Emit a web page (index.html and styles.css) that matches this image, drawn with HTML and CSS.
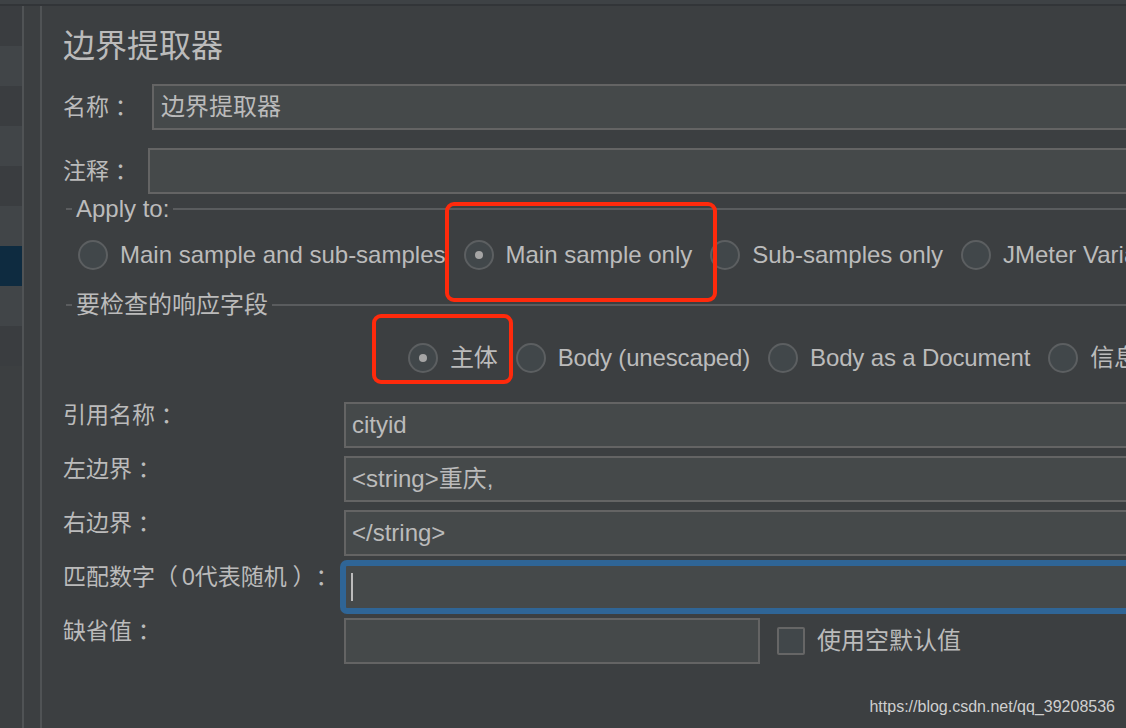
FILE: index.html
```html
<!DOCTYPE html>
<html lang="zh-CN">
<head>
<meta charset="utf-8">
<title>边界提取器</title>
<link rel="stylesheet" href="styles.css">
</head>
<body>
<div class="app">
  <div class="topbar"></div>
  <div class="workspace">
    <div class="tree">
      <div class="tree-row"></div>
      <div class="tree-row alt"></div>
      <div class="tree-row"></div>
      <div class="tree-row alt"></div>
      <div class="tree-row"></div>
      <div class="tree-row alt"></div>
      <div class="tree-row sel"></div>
      <div class="tree-row alt"></div>
      <div class="tree-row"></div>
    </div>
    <div class="vline"></div>
    <div class="gutter"></div>
    <div class="vline"></div>
    <main class="panel">
      <h1 class="title">边界提取器</h1>

      <div class="row row-name">
        <div class="label label-name">名称<span class="punct">：</span></div>
        <div class="input input-name">边界提取器</div>
      </div>
      <div class="row row-comment">
        <div class="label label-comment">注释<span class="punct">：</span></div>
        <div class="input"></div>
      </div>

      <div class="group-head head-apply">
        <span class="group-tick"></span>
        <span class="group-title">Apply to:</span>
        <span class="group-line"></span>
      </div>
      <div class="radios radios-apply">
        <div class="radio"><span class="radio-dot"></span><span>Main sample and sub-samples</span></div>
        <div class="radio"><span class="radio-dot on"></span><span>Main sample only</span></div>
        <div class="radio"><span class="radio-dot"></span><span>Sub-samples only</span></div>
        <div class="radio"><span class="radio-dot"></span><span>JMeter Variable Name to use</span></div>
      </div>

      <div class="group-head head-field">
        <span class="group-tick"></span>
        <span class="group-title">要检查的响应字段</span>
        <span class="group-line"></span>
      </div>
      <div class="radios radios-field">
        <div class="radio"><span class="radio-dot on"></span><span>主体</span></div>
        <div class="radio"><span class="radio-dot"></span><span>Body (unescaped)</span></div>
        <div class="radio"><span class="radio-dot"></span><span>Body as a Document</span></div>
        <div class="radio"><span class="radio-dot"></span><span>信息头</span></div>
        <div class="radio"><span class="radio-dot"></span><span>Request Headers</span></div>
      </div>

      <div class="fields">
        <div class="field">
          <div class="label label-field">引用名称<span class="punct">：</span></div>
          <div class="input input-field">cityid</div>
        </div>
        <div class="field">
          <div class="label label-field">左边界<span class="punct">：</span></div>
          <div class="input input-field">&lt;string&gt;重庆,</div>
        </div>
        <div class="field">
          <div class="label label-field">右边界<span class="punct">：</span></div>
          <div class="input input-field">&lt;/string&gt;</div>
        </div>
        <div class="field">
          <div class="label label-field">匹配数字<span class="paren-open">（</span>0代表随机<span class="punct">）</span><span class="punct">：</span></div>
          <div class="input input-field focus"><span class="caret"></span></div>
        </div>
        <div class="field">
          <div class="label label-field">缺省值<span class="punct">：</span></div>
          <div class="input input-field short"></div>
          <span class="check"></span>
          <span class="check-label">使用空默认值</span>
        </div>
      </div>
    </main>
  </div>

  <div class="mark mark-apply"></div>
  <div class="mark mark-field"></div>
  <div class="watermark">https://blog.csdn.net/qq_39208536</div>
</div>
</body>
</html>
```

FILE: styles.css
```css
* { box-sizing: border-box; }

html, body {
  margin: 0;
  padding: 0;
}

body {
  width: 1126px;
  height: 728px;
  overflow: hidden;
  background: #3c3f41;
  color: #bbbbbb;
  font-family: "Liberation Sans", "Noto Sans CJK SC", sans-serif;
  text-spacing-trim: space-all;
}

.app {
  position: relative;
  width: 1126px;
  height: 728px;
  display: flex;
  flex-direction: column;
}

.topbar {
  flex: none;
  height: 6px;
  background: #3e4245;
  border-bottom: 2px solid #323538;
}

.workspace {
  flex: 1;
  min-height: 0;
  display: flex;
}

.tree {
  flex: none;
  width: 22px;
  display: flex;
  flex-direction: column;
  background: #3c3f41;
}

.tree-row {
  flex: none;
  height: 40px;
  background: #3a3d40;
}

.tree-row.alt { background: #414548; }
.tree-row.sel { background: #0e2b40; }

.vline {
  flex: none;
  width: 2px;
  background: #505355;
}

.gutter {
  flex: none;
  width: 16px;
}

.panel {
  flex: 1;
  min-width: 0;
  overflow: hidden;
  display: flex;
  flex-direction: column;
  padding: 20px 0 0 21px;
}

.title {
  margin: 0;
  font-size: 32px;
  line-height: 40px;
  font-weight: normal;
}

.row {
  display: flex;
  align-items: center;
  height: 46px;
  flex: none;
}

.row-name { margin-top: 18px; }
.row-comment { margin-top: 18px; }

.label {
  flex: none;
  font-size: 23px;
  line-height: 26px;
  white-space: nowrap;
}

.punct {
  display: inline-block;
  width: 1em;
  text-align: center;
  font-feature-settings: "halt" 1;
}

.paren-open {
  display: inline-block;
  width: 27px;
}

.label-name { width: 89px; }
.label-comment { width: 85px; }
.label-field { width: 281px; }

.input {
  flex: 1;
  height: 46px;
  margin-right: -12px;
  padding-left: 7px;
  background: #45494a;
  border: 2px solid #646464;
  font-size: 24px;
  line-height: 42px;
  white-space: nowrap;
  overflow: hidden;
}

.group-head {
  flex: none;
  display: flex;
  align-items: center;
  height: 24px;
  margin-left: 3px;
}

.head-apply { margin-top: 3px; }
.head-field { margin-top: 23px; }

.group-tick {
  flex: none;
  width: 6px;
  height: 2px;
  background: #5a5c5e;
}

.group-title {
  flex: none;
  padding: 0 4px;
  font-size: 24px;
  line-height: 24px;
  white-space: nowrap;
}

.group-line {
  flex: 1;
  height: 2px;
  background: #5a5c5e;
}

.radios {
  flex: none;
  display: flex;
  align-items: center;
  gap: 18px;
  height: 30px;
  white-space: nowrap;
}

.radios-apply { margin: 19px 0 0 15px; }
.radios-field { margin: 26px 0 0 345px; }

.radio {
  flex: none;
  display: flex;
  align-items: center;
  gap: 12px;
  font-size: 24px;
  line-height: 30px;
}

.radios-field .radio { letter-spacing: -0.15px; }

.radio-dot {
  flex: none;
  width: 30px;
  height: 30px;
  border-radius: 50%;
  border: 2px solid #5c5f61;
  background: #41474a;
  display: flex;
  align-items: center;
  justify-content: center;
}

.radio-dot.on::after {
  content: "";
  width: 8px;
  height: 8px;
  border-radius: 50%;
  background: #a5a5a5;
}

.fields {
  flex: none;
  display: flex;
  flex-direction: column;
  gap: 8px;
  margin-top: 29px;
}

.field {
  display: flex;
  align-items: flex-start;
  height: 46px;
}

.input-field { padding-left: 6px; }

.input.focus {
  border-color: #2f6596;
  border-radius: 3px;
  box-shadow: 0 0 0 4px #2f6596;
  padding-left: 5px;
  display: flex;
  align-items: center;
}

.caret {
  display: block;
  width: 2px;
  height: 28px;
  background: #bbbbbb;
}

.input.short {
  flex: none;
  width: 416px;
  margin-right: 0;
}

.check {
  flex: none;
  align-self: center;
  width: 28px;
  height: 28px;
  margin-left: 17px;
  border: 2px solid #666666;
  border-radius: 2px;
  background: #41474a;
}

.check-label {
  flex: none;
  align-self: center;
  margin-left: 12px;
  font-size: 24px;
  line-height: 30px;
  white-space: nowrap;
}

.mark {
  position: absolute;
  border: 4px solid #ff2a0c;
  border-radius: 9px;
}

.mark-apply {
  left: 445px;
  top: 202px;
  width: 272px;
  height: 100px;
}

.mark-field {
  left: 372px;
  top: 314px;
  width: 141px;
  height: 70px;
}

.watermark {
  position: absolute;
  right: 11px;
  top: 697px;
  font-size: 16px;
  line-height: 19px;
  color: #cfcfcf;
  white-space: nowrap;
}
```
